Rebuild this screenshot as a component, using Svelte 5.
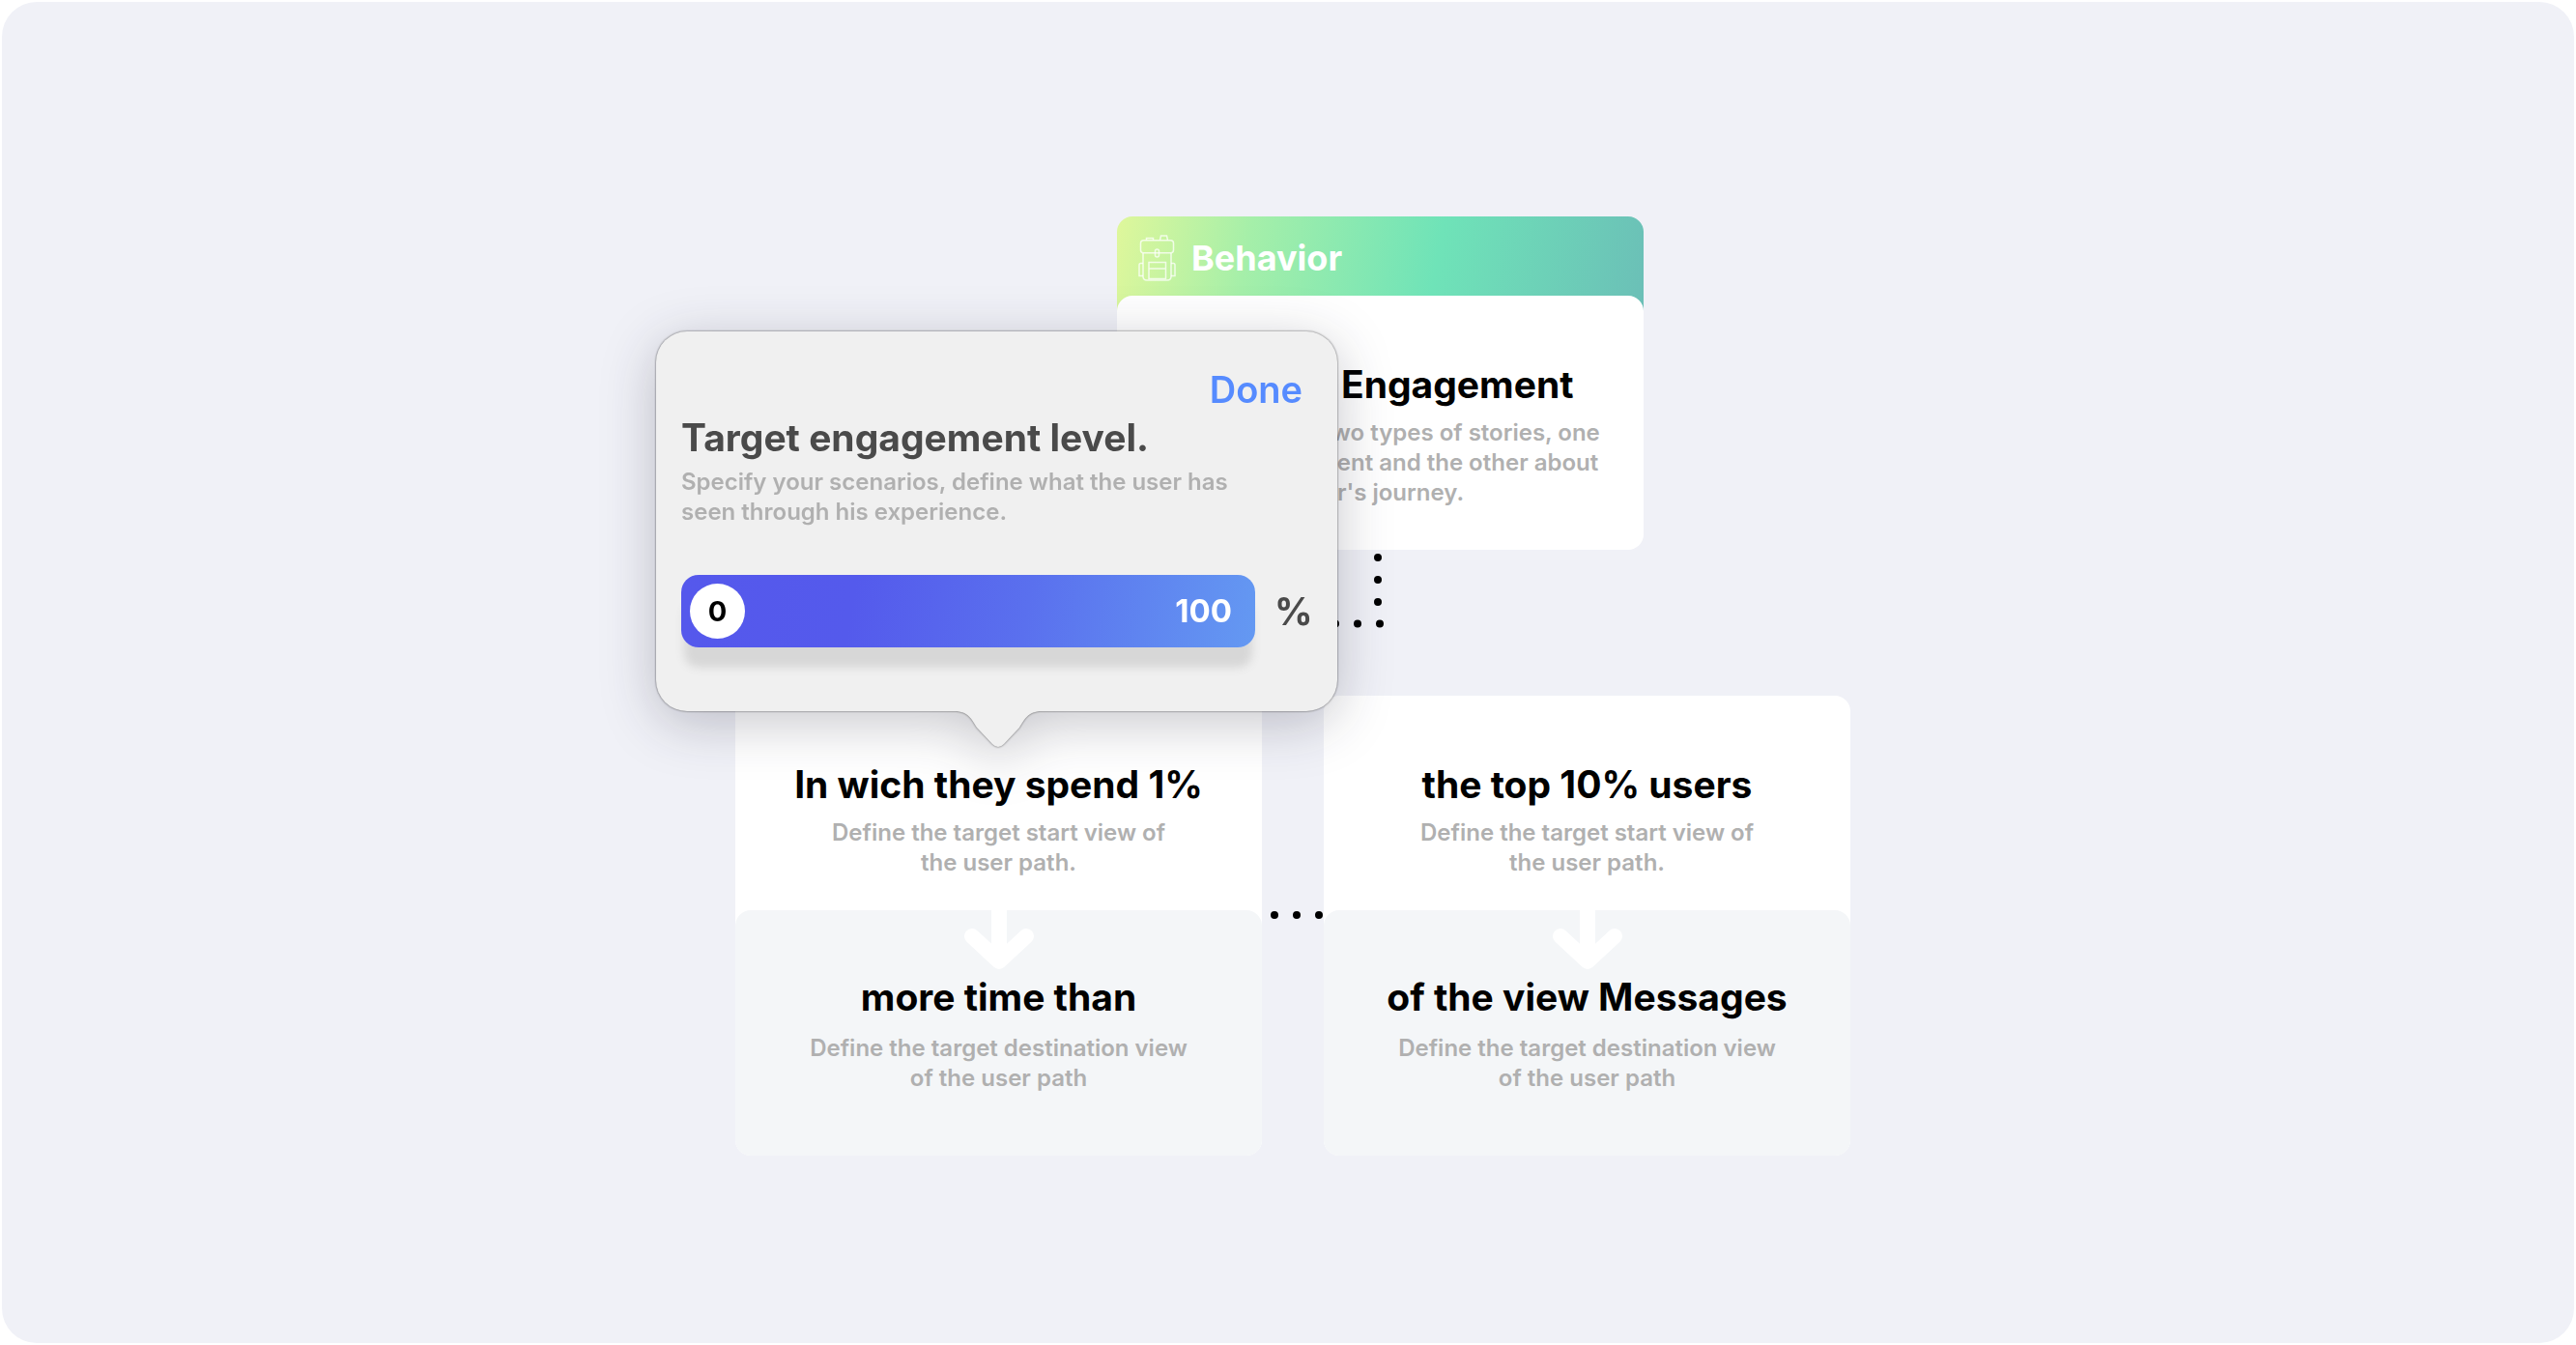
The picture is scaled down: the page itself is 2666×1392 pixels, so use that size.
<script>
  let level = $state(0);

  const columns = [
    {
      start: 'In wich they spend 1%',
      end: 'more time than'
    },
    {
      start: 'the top 10% users',
      end: 'of the view Messages'
    }
  ];
</script>

<main class="stage">
  <div class="board">
    <article class="behavior">
      <header>
        <svg class="backpack" viewBox="0 0 39 48" aria-hidden="true">
          <rect x="2.500" y="5.700" width="34" height="13" rx="3" />
          <path d="M8.500 5.500V3.500h7v2M22.500 5.500L23.500 1h6l1 4.500" />
          <path d="M5 19v24q0 4 4 4h21q4 0 4-4V19" />
          <rect x="17.500" y="15" width="4" height="8" rx="2" />
          <path d="M11 28.500h17.500v17H11zM11 35h17.500" />
          <path d="M5 29.500H2.500q-1.500 0-1.500 2v11H5M34 29.500h2.500q1.500 0 1.500 2v11H34" />
        </svg>
        <h1>Behavior</h1>
      </header>
      <section class="summary">
        <h2>Product Engagement</h2>
        <p>
          You can make two types of stories, one<br />
          about engagement and the other about<br />
          user's journey.
        </p>
      </section>
    </article>

    <svg class="branch" viewBox="0 0 402 151" aria-hidden="true">
      <path d="M396 8V76.500" />
      <path d="M398 76.500H4V140" />
    </svg>

    <div class="columns">
      {#each columns as column}
        <article class="path">
          <section class="start">
            <h2>{column.start}</h2>
            <p>Define the target start view of<br />the user path.</p>
          </section>
          <section class="end">
            <svg class="arrow" viewBox="0 0 72 62" aria-hidden="true">
              <path d="M36 -8V50M8 27L36 53L64 27" />
            </svg>
            <h2>{column.end}</h2>
            <p>Define the target destination view<br />of the user path</p>
          </section>
        </article>
      {/each}
      <svg class="link" viewBox="0 0 64 8" aria-hidden="true">
        <path d="M13 4H64" />
      </svg>
    </div>

    <div class="popover" role="dialog" aria-labelledby="level-title">
      <button type="button" class="done">Done</button>
      <h2 id="level-title">Target engagement level.</h2>
      <p>Specify your scenarios, define what the user has<br />seen through his experience.</p>
      <div class="level">
        <div class="slider">
          <input type="range" min="0" max="100" bind:value={level} aria-labelledby="level-title" />
          <output style:--level={level / 100}>{level}</output>
          <span class="max">100</span>
        </div>
        <span class="unit">%</span>
      </div>
      <svg class="tail" viewBox="0 0 90 39" aria-hidden="true">
        <path d="M0 0V1C14 1 18 10 23 18L39 35Q45 41 51 35L67 18C72 10 76 1 90 1V0Z" />
      </svg>
    </div>
  </div>
</main>

<style>
  :global(body) {
    margin: 0;
    background: #fff;
  }

  .stage {
    box-sizing: border-box;
    min-height: calc(100vh - 4px);
    margin: 2px;
    padding: 222px 0 80px 10px;
    border-radius: 36px;
    background: #f0f1f7;
    display: flex;
    justify-content: center;
    align-items: flex-start;
    font-family: Inter, "Liberation Sans", sans-serif;
    color: #000;
  }

  h1,
  h2,
  p {
    margin: 0;
  }

  h1,
  h2 {
    font-size: 39px;
    line-height: 48px;
    font-weight: 700;
    white-space: nowrap;
  }

  h1 {
    font-size: 36px;
  }

  p {
    font-size: 24px;
    line-height: 31px;
    font-weight: 600;
    color: #b0b0b0;
    white-space: nowrap;
  }

  .board {
    position: relative;
    display: flex;
    flex-direction: column;
  }

  .behavior {
    align-self: flex-start;
    width: 545px;
    margin-left: 395px;
    border-radius: 16px;
    background: linear-gradient(100deg, #dff79b 0%, #a5efa9 25%, #6fe3b8 60%, #6bbfb7 100%) top / 100% 112px no-repeat;
  }

  header {
    display: flex;
    align-items: center;
    gap: 16px;
    height: 82px;
    padding: 4px 22px 0;
    box-sizing: border-box;
    color: #fff;
  }

  .backpack {
    width: 39px;
    height: 48px;
    fill: none;
    stroke: #fff;
    stroke-opacity: 0.75;
    stroke-width: 1.5;
  }

  .summary {
    box-sizing: border-box;
    min-height: 263px;
    padding: 68px 0 36px;
    border-radius: 16px;
    background: #fff;
    text-align: center;
    display: flex;
    flex-direction: column;
    align-items: center;
  }

  .branch {
    display: block;
    width: 402px;
    height: 151px;
    margin-left: 269px;
  }

  .branch path,
  .link path {
    fill: none;
    stroke: #000;
    stroke-width: 8;
    stroke-linecap: round;
    stroke-dasharray: 0 23;
  }

  .columns {
    position: relative;
    display: flex;
    gap: 64px;
  }

  .link {
    position: absolute;
    left: 545px;
    top: 223px;
    width: 64px;
    height: 8px;
  }

  .path {
    width: 545px;
    border-radius: 16px;
    background: #fff;
    text-align: center;
  }

  .start {
    height: 222px;
    box-sizing: border-box;
    padding-top: 68px;
  }

  .end {
    position: relative;
    height: 254px;
    box-sizing: border-box;
    padding-top: 66px;
    border-radius: 16px;
    background: #f4f6f8;
  }

  .summary p,
  .start p {
    margin-top: 10px;
  }

  .end p {
    margin-top: 13px;
  }

  .arrow {
    position: absolute;
    top: 0;
    left: 50%;
    width: 72px;
    height: 62px;
    transform: translateX(-50%);
    fill: none;
    stroke: #fff;
    stroke-width: 16;
    stroke-linecap: round;
    stroke-linejoin: round;
  }

  .popover {
    position: absolute;
    left: -82px;
    top: 119px;
    width: 705px;
    height: 393px;
    box-sizing: border-box;
    padding: 36px 26px 0;
    border-radius: 32px;
    background: #f0f0f0;
    filter: drop-shadow(0 0 1px rgba(0, 0, 0, 0.6)) drop-shadow(0 12px 28px rgba(20, 20, 40, 0.24));
    display: flex;
    flex-direction: column;
  }

  .popover h2 {
    margin-top: 2px;
    color: #4a4a4a;
  }

  .popover p {
    margin-top: 6px;
  }

  .done {
    align-self: flex-end;
    margin: 0 10px 0 0;
    padding: 0;
    border: 0;
    background: none;
    font: inherit;
    font-size: 38px;
    line-height: 48px;
    font-weight: 600;
    color: #568bff;
    cursor: pointer;
  }

  .level {
    display: flex;
    align-items: center;
    gap: 20px;
    margin-top: 50px;
  }

  .slider {
    position: relative;
    flex: none;
    display: flex;
    width: 594px;
    height: 75px;
    box-sizing: border-box;
    padding: 9px;
    border-radius: 18px;
    background: linear-gradient(100deg, #5558ec 0%, #545aec 30%, #5a70ee 60%, #6499f2 100%);
    box-shadow: 0 24px 10px -3px #d7d7d7;
  }

  input {
    appearance: none;
    width: 100%;
    height: 57px;
    margin: 0;
    background: none;
  }

  input::-webkit-slider-thumb {
    appearance: none;
    width: 57px;
    height: 57px;
    border-radius: 50%;
    background: #fff;
  }

  output {
    position: absolute;
    left: calc(9px + var(--level) * 519px);
    top: 9px;
    width: 57px;
    line-height: 57px;
    font-size: 29px;
    font-weight: 700;
    text-align: center;
    pointer-events: none;
  }

  .max {
    position: absolute;
    right: 24px;
    top: 9px;
    line-height: 57px;
    font-size: 33px;
    font-weight: 700;
    color: #fff;
    pointer-events: none;
  }

  .unit {
    font-size: 39px;
    line-height: 48px;
    font-weight: 700;
    color: #4a4a4a;
  }

  .tail {
    position: absolute;
    left: 309px;
    top: 392px;
    width: 90px;
    height: 39px;
    fill: #f0f0f0;
  }
</style>
